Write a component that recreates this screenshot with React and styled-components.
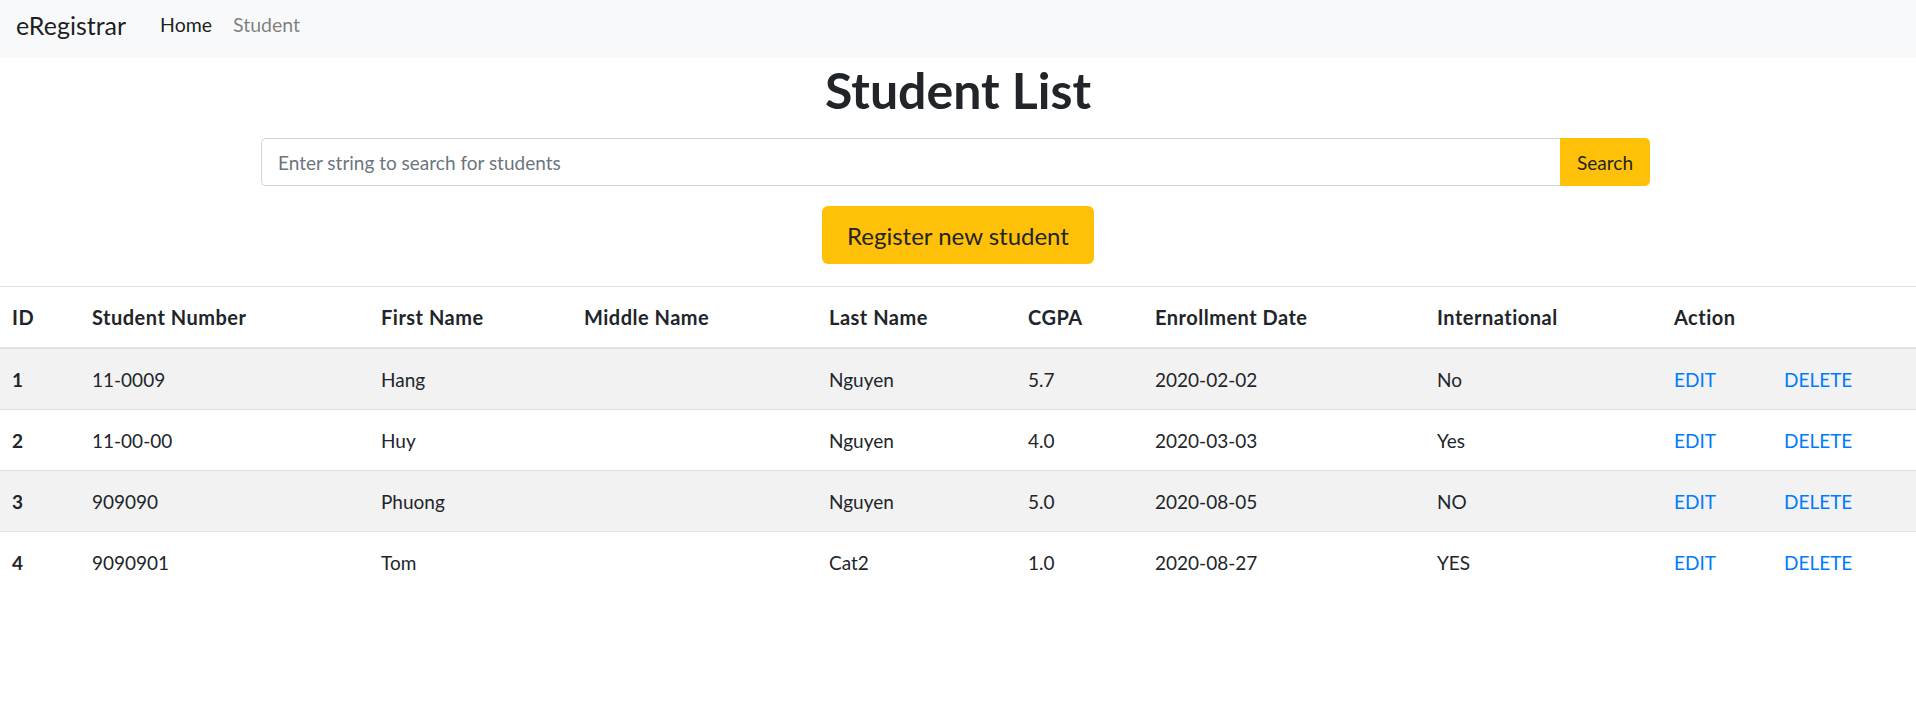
import React from "react";
import styled, { createGlobalStyle } from "styled-components";

const GlobalStyle = createGlobalStyle`
	body {
		margin: 0;
		font-family: Lato, "Open Sans", "Liberation Sans", sans-serif;
		color: #212529;
		background: #fff;
	}
`;

const Navbar = styled.nav`
	display: flex;
	align-items: center;
	height: 58px;
	padding: 0 16px;
	background-color: #f8f9fa;
`;

const Brand = styled.a`
	font-size: 25px;
	color: rgba(0, 0, 0, 0.9);
	margin-right: 34px;
	margin-top: -8px;
`;

const NavLink = styled.a`
	font-size: 19.5px;
	margin-right: 21px;
	margin-top: -10px;
	color: ${p => (p.active ? "rgba(0, 0, 0, 0.9)" : "rgba(0, 0, 0, 0.5)")};
`;

const Title = styled.h1`
	margin: 0;
	padding-top: 3px;
	font-size: 50px;
	font-weight: 700;
	line-height: 58px;
	text-align: center;
`;

const SearchGroup = styled.form`
	display: flex;
	width: 1389px;
	margin: 19px 0 0 261px;
`;

const SearchInput = styled.input`
	flex: 1;
	height: 48px;
	box-sizing: border-box;
	padding: 0 16px;
	border: 1px solid #ced4da;
	border-right: none;
	border-radius: 5px 0 0 5px;
	font-family: inherit;
	font-size: 19px;
	color: #495057;
	&::placeholder {
		color: #6c757d;
	}
`;

const Button = styled.button`
	background-color: #ffc107;
	border: none;
	color: #212529;
	font-family: inherit;
	font-size: ${p => (p.large ? "24px" : "19px")};
	height: ${p => (p.large ? "58px" : "48px")};
	padding: ${p => (p.large ? "0 25px" : "0 17px")};
	border-radius: ${p => (p.large ? "6px" : "0 5px 5px 0")};
`;

const Center = styled.div`
	display: flex;
	justify-content: center;
	margin: 20px 0 22px;
`;

const Table = styled.table`
	width: 100%;
	border-collapse: collapse;
	font-size: 19px;
	table-layout: fixed;
`;

const Th = styled.th`
	text-align: left;
	font-weight: 700;
	font-size: 20px;
	letter-spacing: 0.5px;
	height: 60px;
	padding: 0 12px;
	border-top: 1px solid #dee2e6;
	border-bottom: 2px solid #dee2e6;
`;

const Row = styled.tr`
	background-color: ${p => (p.striped ? "#f2f2f2" : "transparent")};
`;

const Td = styled.td`
	height: 60px;
	padding: 0 12px;
	border-top: ${p => (p.first ? "none" : "1px solid #dee2e6")};
	font-weight: ${p => (p.bold ? 700 : 400)};
`;

const ActionLink = styled.a`
	color: #007bff;
	text-decoration: none;
`;

const columns = [80, 289, 203, 245, 199, 127, 282, 237, 110, 144];

const students = [
	{ id: 1, num: "11-0009", first: "Hang", middle: "", last: "Nguyen", cgpa: "5.7", date: "2020-02-02", intl: "No" },
	{ id: 2, num: "11-00-00", first: "Huy", middle: "", last: "Nguyen", cgpa: "4.0", date: "2020-03-03", intl: "Yes" },
	{ id: 3, num: "909090", first: "Phuong", middle: "", last: "Nguyen", cgpa: "5.0", date: "2020-08-05", intl: "NO" },
	{ id: 4, num: "9090901", first: "Tom", middle: "", last: "Cat2", cgpa: "1.0", date: "2020-08-27", intl: "YES" },
];

export default function App() {
	return (
		<>
			<GlobalStyle />
			<Navbar>
				<Brand>eRegistrar</Brand>
				<NavLink active>Home</NavLink>
				<NavLink>Student</NavLink>
			</Navbar>
			<Title>Student List</Title>
			<SearchGroup onSubmit={e => e.preventDefault()}>
				<SearchInput placeholder="Enter string to search for students" />
				<Button type="submit">Search</Button>
			</SearchGroup>
			<Center>
				<Button large>Register new student</Button>
			</Center>
			<Table>
				<colgroup>
					{columns.map((w, i) => (
						<col key={i} style={{ width: w }} />
					))}
				</colgroup>
				<thead>
					<tr>
						<Th>ID</Th>
						<Th>Student Number</Th>
						<Th>First Name</Th>
						<Th>Middle Name</Th>
						<Th>Last Name</Th>
						<Th>CGPA</Th>
						<Th>Enrollment Date</Th>
						<Th>International</Th>
						<Th colSpan={2}>Action</Th>
					</tr>
				</thead>
				<tbody>
					{students.map((s, i) => (
						<Row key={s.id} striped={i % 2 === 0}>
							<Td first={i === 0} bold>{s.id}</Td>
							<Td first={i === 0}>{s.num}</Td>
							<Td first={i === 0}>{s.first}</Td>
							<Td first={i === 0}>{s.middle}</Td>
							<Td first={i === 0}>{s.last}</Td>
							<Td first={i === 0}>{s.cgpa}</Td>
							<Td first={i === 0}>{s.date}</Td>
							<Td first={i === 0}>{s.intl}</Td>
							<Td first={i === 0}><ActionLink href="#">EDIT</ActionLink></Td>
							<Td first={i === 0}><ActionLink href="#">DELETE</ActionLink></Td>
						</Row>
					))}
				</tbody>
			</Table>
		</>
	);
}
